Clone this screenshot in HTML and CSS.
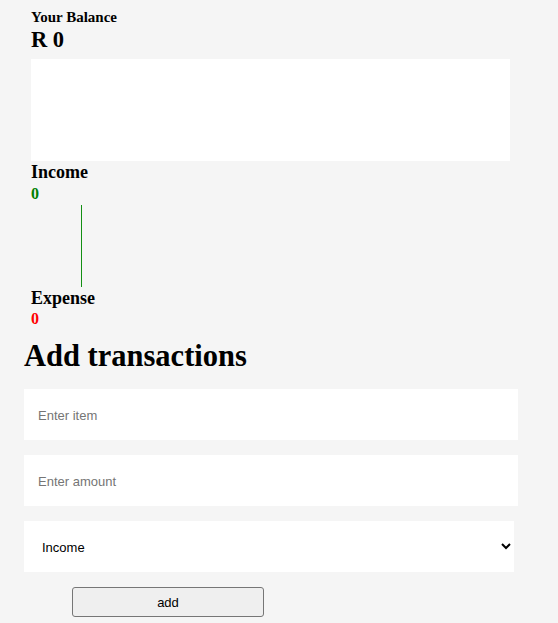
FILE: index.html
```html
<!DOCTYPE html>
<html lang="en">
<head>
<meta charset="utf-8">
<title>Expense Tracker</title>
<link rel="stylesheet" href="styles.css">
</head>
<body>
<main class="app">
  <section class="summary">
    <h4 class="balance-label">Your Balance</h4>
    <h2 class="balance-value">R 0</h2>
    <div class="chart-box"></div>
    <div class="stat">
      <h3 class="stat-label income-label">Income</h3>
      <p class="stat-value income">0</p>
    </div>
    <div class="divider"></div>
    <div class="stat">
      <h3 class="stat-label">Expense</h3>
      <p class="stat-value expense">0</p>
    </div>
  </section>
  <section class="form-section">
    <h1 class="form-title">Add transactions</h1>
    <form class="tx-form">
      <input class="field" type="text" placeholder="Enter item">
      <input class="field" type="number" placeholder="Enter amount">
      <select class="field select">
        <option>Income</option>
        <option>Expense</option>
      </select>
      <button class="add-btn" type="button">add</button>
    </form>
  </section>
</main>
</body>
</html>
```
FILE: styles.css
```css
* { box-sizing: border-box; }
html, body {
  margin: 0;
  padding: 0;
  background: #f5f5f5;
}
body {
  font-family: "Liberation Serif", "Times New Roman", serif;
  color: #000;
}
.app {
  display: flex;
  flex-direction: column;
  padding-top: 8px;
}
.summary {
  display: flex;
  flex-direction: column;
  padding-left: 31px;
}
.balance-label {
  margin: 0;
  font-size: 15px;
  line-height: 19px;
  font-weight: bold;
}
.balance-value {
  margin: 0;
  font-size: 22.5px;
  line-height: 26px;
  font-weight: bold;
}
.chart-box {
  margin-top: 6px;
  width: 479px;
  height: 102px;
  background: #fff;
}
.stat { display: flex; flex-direction: column; }
.stat-label {
  margin: 0;
  font-size: 18px;
  line-height: 20px;
  font-weight: bold;
}
.income-label { line-height: 22px; }
.stat-value {
  margin: 0;
  font-size: 16px;
  font-weight: bold;
}
.income { color: #008000; line-height: 22px; }
.expense { color: #ff0000; line-height: 22px; }
.divider {
  margin: 0 0 1px 50px;
  width: 1px;
  height: 82px;
  background: #138f13;
}
.form-section {
  display: flex;
  flex-direction: column;
  padding-left: 24px;
}
.form-title {
  margin: 9px 0 16px;
  font-size: 30.5px;
  line-height: 34px;
  font-weight: bold;
}
.tx-form {
  display: flex;
  flex-direction: column;
  align-items: flex-start;
  gap: 15px;
}
.field {
  width: 494px;
  height: 51px;
  border: none;
  outline: none;
  background: #fff;
  padding: 1px 14px 0;
  font-family: "Liberation Sans", Arial, sans-serif;
  font-size: 13px;
  color: #000;
  border-radius: 0;
}
.field::placeholder { color: #757575; }
.select {
  width: 490px;
  padding-left: 14px;
  padding-right: 4px;
}
.add-btn {
  margin-left: 48px;
  width: 192px;
  height: 30px;
  background: #efefef;
  border: 1px solid #767676;
  border-radius: 3px;
  padding-top: 1px;
  font-family: "Liberation Sans", Arial, sans-serif;
  font-size: 13px;
  color: #000;
}
```
